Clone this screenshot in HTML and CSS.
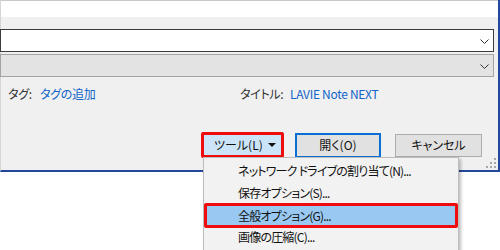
FILE: index.html
```html
<!DOCTYPE html>
<html lang="ja">
<head>
    <meta charset="UTF-8">
    <title>ファイルを開く</title>
    <link rel="stylesheet" href="styles.css">
</head>
<body>

    <div class="window">
        <div class="file-list"></div>

        <div class="fields">
            <div class="combo">
                <svg class="chevron" width="9" height="5" viewBox="0 0 9 5"><polyline points="0.5,0.5 4.5,4.5 8.5,0.5" fill="none" stroke="#333" stroke-width="1"/></svg>
            </div>
            <div class="combo combo-disabled">
                <svg class="chevron" width="9" height="5" viewBox="0 0 9 5"><polyline points="0.5,0.5 4.5,4.5 8.5,0.5" fill="none" stroke="#333" stroke-width="1"/></svg>
            </div>
        </div>

        <div class="meta">
            <span class="meta-label tag-label">タグ:</span>
            <span class="meta-value tag-value">タグの追加</span>
            <span class="meta-label title-label">タイトル:</span>
            <span class="meta-value">LAVIE Note NEXT</span>
        </div>

        <div class="actions">
            <button class="btn btn-tools">ツール(L)<span class="caret"></span></button>
            <button class="btn btn-open">開く(O)</button>
            <button class="btn btn-cancel">キャンセル</button>
        </div>

        <svg class="grip" width="10" height="10" viewBox="0 0 10 10">
            <rect x="8" y="0" width="2" height="2" fill="#a6a6a6"/>
            <rect x="4" y="4" width="2" height="2" fill="#a6a6a6"/>
            <rect x="8" y="4" width="2" height="2" fill="#a6a6a6"/>
            <rect x="0" y="8" width="2" height="2" fill="#a6a6a6"/>
            <rect x="4" y="8" width="2" height="2" fill="#a6a6a6"/>
            <rect x="8" y="8" width="2" height="2" fill="#a6a6a6"/>
        </svg>
    </div>

    <ul class="menu">
        <li class="menu-item">ネットワーク&nbsp;ドライブの割り当て(N)...</li>
        <li class="menu-item">保存オプション(S)...</li>
        <li class="menu-item active">全般オプション(G)...</li>
        <li class="menu-item">画像の圧縮(C)...</li>
    </ul>

</body>
</html>
```

FILE: styles.css
```css
body {
    margin: 0;
    background: #fff;
    font-family: "Noto Sans CJK JP", "Noto Sans", sans-serif;
    font-size: 12px;
    font-feature-settings: "palt";
    color: #222;
    overflow: hidden;
}
.window {
    position: relative;
    width: 497px;
    height: 170px;
    background: #f0f0f0;
    border-left: 1px solid #d4d4d4;
    border-right: 2px solid #23479a;
    border-bottom: 2px solid #23479a;
}
.file-list {
    height: 16px;
    background: #fff;
    border-top: 1px solid #c8c8c8;
}
.fields {
    padding-top: 12px;
    margin-left: -1px;
    width: 494px;
}
.combo {
    position: relative;
    height: 23px;
    box-sizing: border-box;
    background: #fff;
    border: 1px solid #3c3c3c;
    margin-bottom: 2px;
}
.combo-disabled {
    background: #e3e3e3;
    border-color: #a3a3a3;
}
.chevron {
    position: absolute;
    right: 4px;
    top: 9px;
}
.meta {
    display: flex;
    align-items: center;
    height: 16px;
    margin-top: 9px;
    padding-left: 7px;
    line-height: 16px;
    letter-spacing: -0.3px;
}
.meta-label {
    color: #333;
}
.tag-label {
    width: 32px;
}
.meta-value {
    color: #1164c9;
}
.tag-value {
    width: 200px;
}
.title-label {
    width: 50px;
}
.actions {
    display: flex;
    align-items: center;
    justify-content: flex-end;
    height: 26px;
    margin-top: 30px;
    padding-right: 16px;
}
.btn {
    font-family: inherit;
    font-size: 12px;
    font-feature-settings: "palt";
    color: #111;
    background: #e1e1e1;
    border: 1px solid #adadad;
    box-sizing: border-box;
    padding: 0;
    height: 23px;
    line-height: 20px;
}
.btn-tools {
    width: 83px;
    height: 26px;
    background: #cce4f7;
    border: 3px solid #f00c0c;
    border-radius: 2px;
    text-align: left;
    padding-left: 10px;
    margin-right: 11px;
    position: relative;
}
.caret {
    position: absolute;
    right: 5px;
    top: 8px;
    border-left: 4px solid transparent;
    border-right: 4px solid transparent;
    border-top: 4px solid #111;
}
.btn-open {
    width: 86px;
    height: 25px;
    border: 2px solid #0a6fd4;
    margin-right: 14px;
}
.btn-cancel {
    width: 87px;
}
.grip {
    position: absolute;
    right: 2px;
    bottom: 2px;
}
.menu {
    position: absolute;
    left: 203px;
    top: 157px;
    width: 256px;
    box-sizing: border-box;
    margin: 0;
    padding: 2px 0;
    list-style: none;
    background: #f2f2f2;
    border: 1px solid #bdbdbd;
    box-shadow: 2px 2px 3px rgba(0, 0, 0, 0.25);
}
.menu-item {
    height: 22px;
    line-height: 22px;
    padding-left: 34px;
    color: #111;
    letter-spacing: -0.8px;
}
.menu-item.active {
    height: 25px;
    line-height: 19px;
    margin: -1px 0 -2px;
    padding-left: 31px;
    box-sizing: border-box;
    background: #99c9f2;
    border: 3px solid #f00c0c;
    border-radius: 2px;
}
```
